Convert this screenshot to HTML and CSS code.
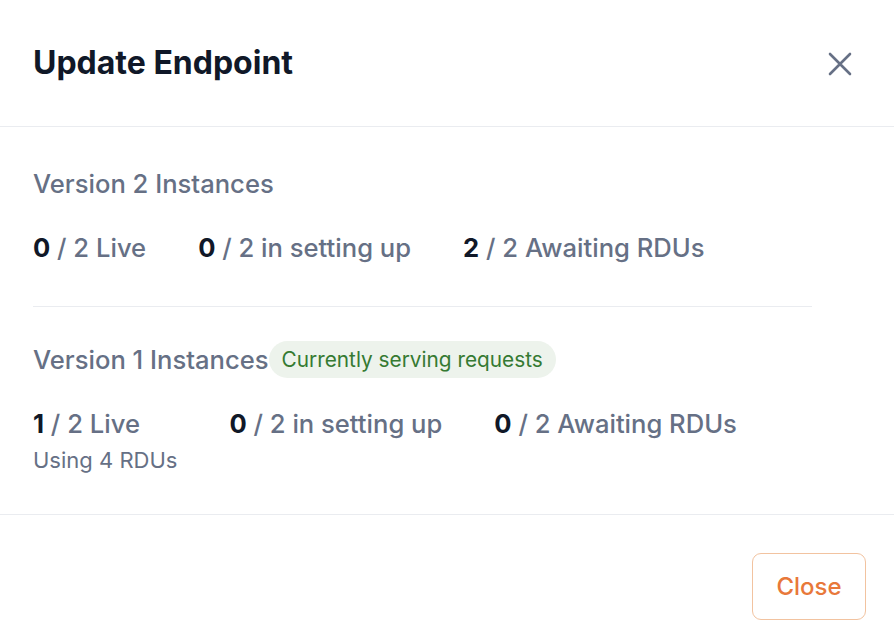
FILE: index.html
```html
<!DOCTYPE html>
<html>
<head>
<meta charset="utf-8">
<link rel="stylesheet" href="styles.css">
</head>
<body>
<div class="modal">
  <header class="modal-header">
    <h1 class="modal-title">Update Endpoint</h1>
    <button class="icon-btn" aria-label="Close">
      <svg width="24" height="24" viewBox="0 0 24 24"><path d="M2 2L22 22M22 2L2 22" stroke="#667085" stroke-width="2.6" stroke-linecap="round"/></svg>
    </button>
  </header>
  <main class="modal-body">
    <section class="version">
      <div class="version-title">Version 2 Instances</div>
      <div class="stats">
        <div class="stat"><b>0</b> / 2 Live</div>
        <div class="stat"><b>0</b> / 2 in setting up</div>
        <div class="stat"><b>2</b> / 2 Awaiting RDUs</div>
      </div>
    </section>
    <hr class="divider">
    <section class="version">
      <div class="version-title row">Version 1 Instances<span class="pill">Currently serving requests</span></div>
      <div class="stats second">
        <div class="stat"><div><b>1</b> / 2 Live</div><div class="sub">Using 4 RDUs</div></div>
        <div class="stat"><b>0</b> / 2 in setting up</div>
        <div class="stat"><b>0</b> / 2 Awaiting RDUs</div>
      </div>
    </section>
  </main>
  <footer class="modal-footer">
    <button class="btn-close">Close</button>
  </footer>
</div>
</body>
</html>
```
FILE: styles.css
```css
* { box-sizing: border-box; }
html, body { margin: 0; padding: 0; background: #fff; }
body {
  font-family: Inter, "Noto Sans", sans-serif;
  color: #667085;
  width: 894px;
  height: 642px;
  overflow: hidden;
}
.modal { display: flex; flex-direction: column; }
.modal-header {
  height: 127px;
  display: flex;
  align-items: center;
  justify-content: space-between;
  padding: 0 42px 0 33px;
  border-bottom: 1px solid #eaecf0;
}
.modal-title {
  margin: 0;
  font-size: 32px;
  font-weight: 700;
  line-height: 38px;
  color: #101828;
}
.icon-btn {
  background: none;
  border: 0;
  padding: 0;
  width: 24px;
  height: 24px;
  display: flex;
  margin-top: 1px;
}
.modal-body {
  padding: 39px 82px 39px 33px;
}
.version-title {
  font-size: 25.6px;
  line-height: 36px;
  font-weight: 500;
  color: #667085;
}
.version-title.row {
  display: flex;
  align-items: center;
  height: 37px;
}
.pill {
  margin-left: 0;
  background: #edf3ec;
  color: #357a32;
  font-size: 20.8px;
  font-weight: 400;
  line-height: 37px;
  padding: 0 13px;
  border-radius: 19px;
}
.stats {
  display: flex;
  gap: 52px;
  margin-top: 28px;
}
.stats.second { margin-top: 28px; }
.stat {
  font-size: 25.6px;
  line-height: 36px;
  font-weight: 500;
}
.stat b { color: #101828; font-weight: 700; }
.sub {
  font-size: 22px;
  line-height: 30px;
  font-weight: 400;
  margin-top: 3px;
}
.divider {
  border: 0;
  border-top: 1px solid #eaecf0;
  margin: 40px 0 34px;
}
.modal-footer {
  border-top: 1px solid #eaecf0;
  padding: 38px 28px;
  display: flex;
  justify-content: flex-end;
}
.btn-close {
  width: 114px;
  height: 67px;
  background: #fff;
  border: 1px solid #f2c3a0;
  border-radius: 9px;
  color: #e8783a;
  font-family: Inter, "Noto Sans", sans-serif;
  font-size: 24px;
  font-weight: 500;
}
```
